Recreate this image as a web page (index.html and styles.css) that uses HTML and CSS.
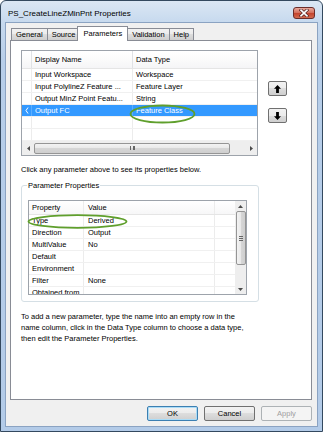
FILE: index.html
```html
<!DOCTYPE html>
<html lang="en">

<head>
    <meta charset="UTF-8">
    <meta name="viewport" content="width=device-width, initial-scale=1.0">
    <title>PS_CreateLineZMinPnt Properties</title>
    <link rel="stylesheet" href="styles.css">
</head>

<body>
    <div class="window">
        <div class="titlebar">
            <span class="title">PS_CreateLineZMinPnt Properties</span>
            <div class="close-btn">
                <svg width="10" height="8" viewBox="0 0 10 8">
                    <path d="M2 1.2 L8 6.8 M8 1.2 L2 6.8" stroke="#5a2a28" stroke-width="3.2" stroke-linecap="square" />
                    <path d="M2 1.2 L8 6.8 M8 1.2 L2 6.8" stroke="#ffffff" stroke-width="1.6" stroke-linecap="square" />
                </svg>
            </div>
        </div>

        <div class="client">
            <div class="tabs">
                <div class="tab">General</div>
                <div class="tab">Source</div>
                <div class="tab active">Parameters</div>
                <div class="tab">Validation</div>
                <div class="tab">Help</div>
            </div>

            <div class="panel">
                <div class="param-area">
                    <div class="list">
                        <div class="row head">
                            <div class="cell c-ind"></div>
                            <div class="cell c-name">Display Name</div>
                            <div class="cell c-type">Data Type</div>
                        </div>
                        <div class="row">
                            <div class="cell c-ind"></div>
                            <div class="cell c-name">Input Workspace</div>
                            <div class="cell c-type">Workspace</div>
                        </div>
                        <div class="row">
                            <div class="cell c-ind"></div>
                            <div class="cell c-name">Input PolylineZ Feature ...</div>
                            <div class="cell c-type">Feature Layer</div>
                        </div>
                        <div class="row">
                            <div class="cell c-ind"></div>
                            <div class="cell c-name">Output MinZ Point Featu...</div>
                            <div class="cell c-type">String</div>
                        </div>
                        <div class="row selected">
                            <div class="cell c-ind">
                                <svg width="4" height="7" viewBox="0 0 4 7">
                                    <path d="M3 0.5 L1 3.5 L3 6.5" stroke="#ffffff" stroke-width="1" fill="none" />
                                </svg>
                            </div>
                            <div class="cell c-name">Output FC</div>
                            <div class="cell c-type">Feature Class</div>
                        </div>
                        <div class="row">
                            <div class="cell c-ind"></div>
                            <div class="cell c-name"></div>
                            <div class="cell c-type"></div>
                        </div>
                        <div class="row">
                            <div class="cell c-ind"></div>
                            <div class="cell c-name"></div>
                            <div class="cell c-type"></div>
                        </div>
                        <div class="hscroll">
                            <div class="sb-arrow">
                                <svg width="3" height="5" viewBox="0 0 3 5"><path d="M3 0 L0 2.5 L3 5 Z" fill="#4a4a4a" /></svg>
                            </div>
                            <div class="h-thumb"><span class="grip-h"></span></div>
                            <div class="sb-space"></div>
                            <div class="sb-arrow">
                                <svg width="3" height="5" viewBox="0 0 3 5"><path d="M0 0 L3 2.5 L0 5 Z" fill="#4a4a4a" /></svg>
                            </div>
                        </div>
                    </div>

                    <div class="move-btns">
                        <button class="move-btn">
                            <svg width="7" height="8" viewBox="0 0 7 8"><path d="M3.5 0 L7 3.8 H4.9 V8 H2.1 V3.8 H0 Z" fill="#000" /></svg>
                        </button>
                        <button class="move-btn">
                            <svg width="7" height="8" viewBox="0 0 7 8"><path d="M3.5 8 L7 4.2 H4.9 V0 H2.1 V4.2 H0 Z" fill="#000" /></svg>
                        </button>
                    </div>
                </div>

                <p class="hint">Click any parameter above to see its properties below.</p>

                <fieldset class="props">
                    <legend>Parameter Properties</legend>
                    <div class="grid">
                        <div class="grid-body">
                            <div class="prow phead">
                                <div class="pcell p-key">Property</div>
                                <div class="pcell p-val">Value</div>
                                <div class="pcell p-extra"></div>
                            </div>
                            <div class="prow">
                                <div class="pcell p-key">Type</div>
                                <div class="pcell p-val">Derived</div>
                                <div class="pcell p-extra"></div>
                            </div>
                            <div class="prow">
                                <div class="pcell p-key">Direction</div>
                                <div class="pcell p-val">Output</div>
                                <div class="pcell p-extra"></div>
                            </div>
                            <div class="prow">
                                <div class="pcell p-key">MultiValue</div>
                                <div class="pcell p-val">No</div>
                                <div class="pcell p-extra"></div>
                            </div>
                            <div class="prow">
                                <div class="pcell p-key">Default</div>
                                <div class="pcell p-val"></div>
                                <div class="pcell p-extra"></div>
                            </div>
                            <div class="prow">
                                <div class="pcell p-key">Environment</div>
                                <div class="pcell p-val"></div>
                                <div class="pcell p-extra"></div>
                            </div>
                            <div class="prow">
                                <div class="pcell p-key">Filter</div>
                                <div class="pcell p-val">None</div>
                                <div class="pcell p-extra"></div>
                            </div>
                            <div class="prow">
                                <div class="pcell p-key">Obtained from</div>
                                <div class="pcell p-val"></div>
                                <div class="pcell p-extra"></div>
                            </div>
                        </div>
                        <div class="vscroll">
                            <div class="sb-arrow-v">
                                <svg width="5" height="3" viewBox="0 0 5 3"><path d="M0 3 L2.5 0 L5 3 Z" fill="#4a4a4a" /></svg>
                            </div>
                            <div class="v-thumb"><span class="grip-v"></span></div>
                            <div class="sb-space"></div>
                            <div class="sb-arrow-v">
                                <svg width="5" height="3" viewBox="0 0 5 3"><path d="M0 0 L2.5 3 L5 0 Z" fill="#4a4a4a" /></svg>
                            </div>
                        </div>
                    </div>
                </fieldset>

                <p class="help">To add a new parameter, type the name into an empty row in the<br>
                    name column, click in the Data Type column to choose a data type,<br>
                    then edit the Parameter Properties.</p>
            </div>

            <div class="buttons">
                <button class="btn btn-default">OK</button>
                <button class="btn">Cancel</button>
                <button class="btn" disabled>Apply</button>
            </div>
        </div>
    </div>

    <!-- green marks drawn over the dialog -->
    <svg class="marks" width="323" height="432" viewBox="0 0 323 432">
        <ellipse cx="162.5" cy="114" rx="32" ry="8.5" fill="none" stroke="#5f9f2c" stroke-width="1.8" />
        <ellipse cx="77.5" cy="221.5" rx="49" ry="6.3" fill="none" stroke="#5f9f2c" stroke-width="1.8" />
    </svg>
</body>

</html>
```

FILE: styles.css
```css
* {
    box-sizing: border-box;
}

body {
    margin: 0;
    font-family: "Liberation Sans", Arial, sans-serif;
    font-size: 7.5px;
    color: #000;
    background-color: #ffffff;
    position: relative;
}

.window {
    width: 323px;
    height: 432px;
    border: 1px solid #34495f;
    border-radius: 6px 6px 0 0;
    background: linear-gradient(#dbe7f4, #c6d9ee 22px, #b7cee9 60px, #b3cbe8);
    display: flex;
    flex-direction: column;
}

/* --- title bar --- */
.titlebar {
    height: 21px;
    display: flex;
    align-items: flex-start;
    padding: 0 7px 0 7px;
}

.title {
    font-size: 8px;
    line-height: 9px;
    margin-top: 8px;
}

.close-btn {
    margin-left: auto;
    margin-top: 6px;
    width: 22px;
    height: 12px;
    border: 1px solid #6b2d2a;
    border-radius: 3px;
    background: linear-gradient(#e9a99c, #d4715f 45%, #c4452f 55%, #d26a4f);
    display: flex;
    align-items: center;
    justify-content: center;
}

/* --- client area --- */
.client {
    flex: 1;
    margin: 0 4px 4px 4px;
    border: 1px solid #8ba3c2;
    background-color: #f0f0f0;
    padding: 3px 5px 0 4px;
    display: flex;
    flex-direction: column;
}

.tabs {
    height: 14px;
    display: flex;
    align-items: flex-end;
    padding-left: 1px;
}

.tab {
    height: 12px;
    line-height: 11px;
    padding: 0 4px;
    border: 1px solid #898c95;
    border-bottom: none;
    margin-right: -1px;
    background: linear-gradient(#f2f2f2, #ebebeb 50%, #dddddd 50%, #cfcfcf);
    white-space: nowrap;
}

.tab.active {
    height: 15px;
    line-height: 13px;
    padding: 0 5px;
    margin: 0 -1px -1px -2px;
    background: #ffffff;
    position: relative;
    z-index: 1;
}

.panel {
    height: 360px;
    border: 1px solid #898c95;
    background-color: #ffffff;
    padding: 9px 10px 0 10px;
}

/* --- parameter list --- */
.param-area {
    display: flex;
}

.list {
    width: 237px;
    height: 106px;
    border: 1px solid #9da3ab;
    display: flex;
    flex-direction: column;
    overflow: hidden;
}

.row {
    height: 12px;
    display: flex;
    border-bottom: 1px solid #f0f0f0;
    line-height: 11px;
}

.row.head {
    height: 18px;
    line-height: 17px;
    border-bottom: 1px solid #e5e5e5;
    background: linear-gradient(#ffffff, #fbfbfb 50%, #f5f5f7);
}

.row.selected {
    background-color: #3399ff;
    color: #ffffff;
}

.cell {
    border-right: 1px solid #ececec;
    padding-left: 3px;
    white-space: nowrap;
    overflow: hidden;
}

.c-ind {
    width: 10px;
    padding-left: 3px;
    display: flex;
    align-items: center;
}

.c-name {
    width: 101px;
}

.c-type {
    flex: 1;
    border-right: none;
}

.row.head .cell {
    border-right-color: #e0e2e5;
}

.row.selected .cell {
    border-right-color: #5aaeff;
}

.hscroll {
    margin-top: auto;
    height: 14px;
    display: flex;
    align-items: center;
    background-color: #eeeeee;
    padding: 1px 0;
}

.sb-arrow {
    width: 12px;
    height: 12px;
    display: flex;
    align-items: center;
    justify-content: center;
}

.h-thumb {
    width: 196px;
    height: 11px;
    border: 1px solid #959595;
    border-radius: 2px;
    background: linear-gradient(#f3f3f3, #e8e8e8 50%, #d6d6d6 50%, #cfcfcf);
    display: flex;
    align-items: center;
    justify-content: center;
}

.grip-h {
    width: 5px;
    height: 4px;
    border-left: 1px solid #666;
    border-right: 1px solid #666;
    background: linear-gradient(90deg, transparent 2px, #666 2px, #666 3px, transparent 3px);
}

.sb-space {
    flex: 1;
}

.move-btns {
    display: flex;
    flex-direction: column;
    gap: 12px;
    margin-left: 10px;
    padding-top: 31px;
}

.move-btn {
    width: 19px;
    height: 15px;
    padding: 0;
    border: 1px solid #707070;
    border-radius: 2px;
    background: linear-gradient(#f2f2f2, #ebebeb 50%, #dddddd 50%, #cfcfcf);
    display: flex;
    align-items: center;
    justify-content: center;
}

.hint {
    margin: 8px 0 0 0;
    line-height: 11px;
}

/* --- parameter properties --- */
.props {
    width: 238px;
    margin: 5px 0 0 0;
    padding: 9px 11px 6px 6px;
    border: 1px solid #d5dfe5;
    border-radius: 3px;
}

.props legend {
    padding: 0 1px;
    margin-left: -1px;
    line-height: 11px;
}

.grid {
    height: 95px;
    border: 1px solid #9da3ab;
    display: flex;
    overflow: hidden;
}

.grid-body {
    flex: 1;
}

.prow {
    height: 12px;
    display: flex;
    border-bottom: 1px solid #f0f0f0;
    line-height: 11px;
}

.prow.phead {
    height: 14px;
    line-height: 13px;
    border-bottom: 1px solid #e5e5e5;
    background: linear-gradient(#ffffff, #f7f7f8);
}

.pcell {
    border-right: 1px solid #ececec;
    padding-left: 3px;
    white-space: nowrap;
}

.p-key {
    width: 55px;
}

.p-val {
    width: 131px;
    padding-left: 4px;
}

.p-extra {
    flex: 1;
    border-right: none;
}

.vscroll {
    width: 11px;
    background-color: #eeeeee;
    display: flex;
    flex-direction: column;
    align-items: center;
}

.sb-arrow-v {
    height: 10px;
    width: 11px;
    display: flex;
    align-items: center;
    justify-content: center;
}

.v-thumb {
    width: 10px;
    height: 54px;
    border: 1px solid #959595;
    border-radius: 2px;
    background: linear-gradient(90deg, #f3f3f3, #e8e8e8 50%, #d6d6d6 50%, #cfcfcf);
    display: flex;
    align-items: center;
    justify-content: center;
}

.grip-v {
    width: 4px;
    height: 5px;
    border-top: 1px solid #666;
    border-bottom: 1px solid #666;
    background: linear-gradient(transparent 1px, #666 1px, #666 2px, transparent 2px);
}

.help {
    margin: 9px 0 0 0;
    line-height: 11px;
}

/* --- bottom buttons --- */
.buttons {
    display: flex;
    justify-content: flex-end;
    gap: 6px;
    margin-top: 6px;
}

.btn {
    width: 51px;
    height: 15px;
    padding: 0;
    font: inherit;
    color: #000;
    border: 1px solid #707070;
    border-radius: 2px;
    background: linear-gradient(#f2f2f2, #ebebeb 50%, #dddddd 50%, #cfcfcf);
}

.btn-default {
    border-color: #3c7fb1;
    box-shadow: inset 0 0 0 1px #aadcf7;
}

.btn:disabled {
    color: #a0a0a0;
    border-color: #adb2b5;
    background: #f4f4f4;
}

.marks {
    position: absolute;
    top: 0;
    left: 0;
    pointer-events: none;
}
```
